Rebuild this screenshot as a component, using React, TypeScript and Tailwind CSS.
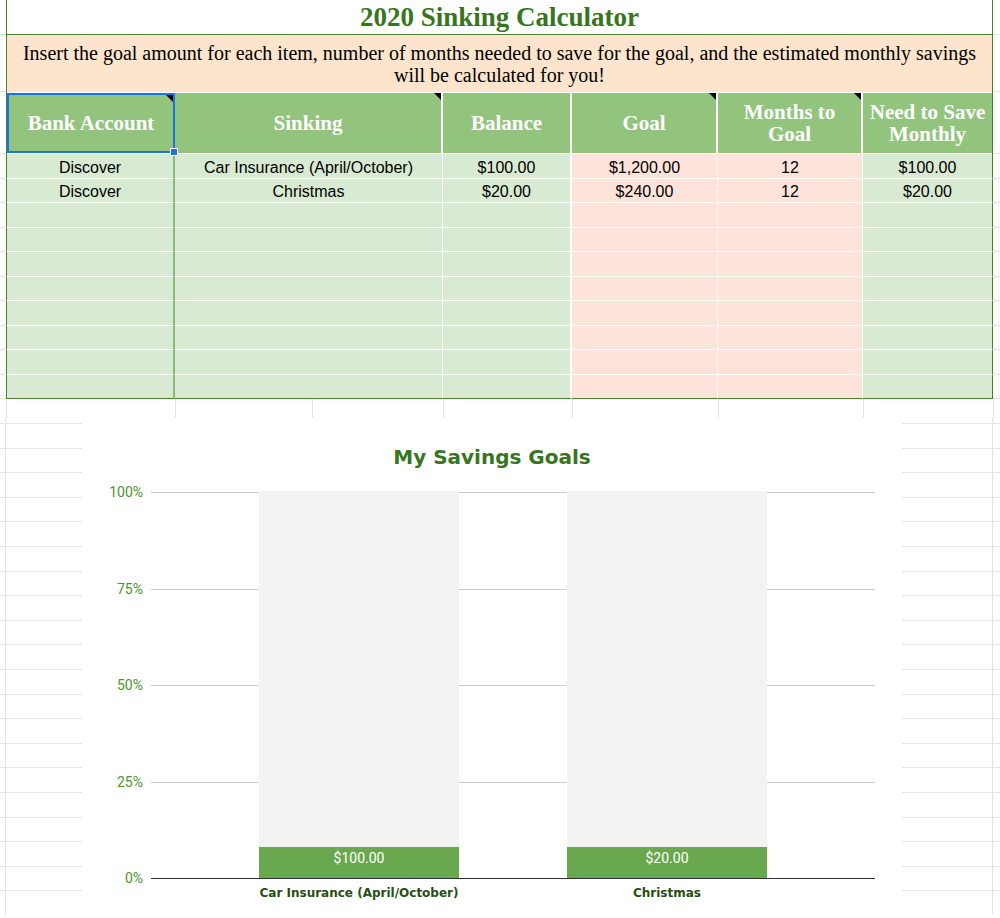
const serif = 'font-["Liberation_Serif","DejaVu_Serif",serif]'
const sans = 'font-["Liberation_Sans",Arial,sans-serif]'

type Row = { bank: string; item: string; balance: string; goal: string; months: string; monthly: string }

const rows: Row[] = [
  { bank: 'Discover', item: 'Car Insurance (April/October)', balance: '$100.00', goal: '$1,200.00', months: '12', monthly: '$100.00' },
  { bank: 'Discover', item: 'Christmas', balance: '$20.00', goal: '$240.00', months: '12', monthly: '$20.00' },
]

const bars = [
  { label: 'Car Insurance (April/October)', value: '$100.00', pct: 100 / 1200 },
  { label: 'Christmas', value: '$20.00', pct: 20 / 240 },
]

function Corner() {
  return <div className="absolute top-0 right-0 w-0 h-0 border-l-[7px] border-l-transparent border-t-[7px] border-t-black" />
}

function Gutter({ count, width, line }: { count: number; width: string; line: 'left' | 'right' }) {
  const mark = line === 'left' ? 'w-[6px]' : 'w-[91px]'
  return (
    <div className={`${width} flex flex-col`}>
      <div className="h-[5px] flex">
        <div className={`${mark} border-r border-[#e3e3e3]`} />
      </div>
      {Array.from({ length: count }).map((_, i) => (
        <div key={i} className="h-[24.6px] shrink-0 border-t border-[#e6e6e6] flex">
          <div className={`${mark} border-r border-[#e3e3e3]`} />
        </div>
      ))}
    </div>
  )
}

export default function App() {
  const empty = Array.from({ length: 8 })
  const cell = `h-[24.5px] flex items-center justify-center pt-[4px] text-[16px] leading-[18px] text-black ${sans}`
  return (
    <div className="w-[1000px] h-[918px] bg-white overflow-hidden">
      {/* Sheet table */}
      <div className="grid grid-cols-[6px_169px_268px_129px_146px_145px_130px_7px]">
        {/* Title */}
        <div className="h-[35px] border-b border-[#e3e3e3]" />
        <div className={`col-span-6 h-[35px] border-x border-b border-[#4a812f] flex items-center justify-center text-[#38761d] font-bold text-[27px] ${serif}`}>
          2020 Sinking Calculator
        </div>
        <div className="border-b border-[#e3e3e3]" />

        {/* Instructions */}
        <div className="border-b border-[#e3e3e3]" />
        <div className={`col-span-6 h-[57px] bg-[#fde5cd] border-x border-[#4a812f] flex items-center justify-center text-center px-[12px] pt-[1px] text-[20px] leading-[22px] text-black ${serif}`}>
          Insert the goal amount for each item, number of months needed to save for the goal, and the estimated monthly savings will be calculated for you!
        </div>
        <div className="border-b border-[#e3e3e3]" />

        {/* Header */}
        <div className="border-b border-[#e3e3e3]" />
        <div className="col-span-6 h-[62px] bg-white border-x border-[#4a812f] pt-[1px] grid grid-cols-[168px_268px_129px_146px_145px_129px]">
          {[
            { t: 'Bank Account', corner: true },
            { t: 'Sinking', corner: true },
            { t: 'Balance', corner: false },
            { t: 'Goal', corner: true },
            { t: 'Months to Goal', corner: true },
            { t: 'Need to Save Monthly', corner: false },
          ].map((h, i) => (
            <div
              key={h.t}
              className={`relative h-[60px] bg-[#93c47d] flex items-center justify-center text-center text-white font-bold text-[21px] leading-[22px] ${serif} ${i === 0 ? 'border-2 border-[#1a73e8]' : i < 5 ? 'border-r-2 border-white' : ''}`}
            >
              <span className={i === 4 ? 'px-[14px]' : ''}>{h.t}</span>
              {h.corner && <Corner />}
              {i === 0 && <div className="absolute -bottom-[5px] -right-[5px] w-[8px] h-[8px] bg-[#1a73e8] border border-white z-10" />}
            </div>
          ))}
        </div>
        <div className="border-b border-[#e3e3e3]" />

        {/* Data rows */}
        {[...rows, ...empty.map(() => null)].map((r, i) => {
          const bottom = i === 9 ? 'border-b-[#4a812f]' : 'border-b-white'
          return (
            <div key={i} className="contents">
              <div className="h-[24.5px] border-b border-[#e3e3e3]" />
              <div className={`bg-[#d9ead3] border-l border-l-[#4a812f] border-r-2 border-r-[#8db67a] border-b ${bottom} ${cell}`}>
                {r?.bank}
              </div>
              <div className={`bg-[#d9ead3] border-r border-r-white border-b ${bottom} ${cell}`}>{r?.item}</div>
              <div className={`bg-[#d9ead3] border-r-2 border-r-white border-b ${bottom} ${cell}`}>{r?.balance}</div>
              <div className={`bg-[#fee3da] border-r border-r-white border-b ${bottom} ${cell}`}>{r?.goal}</div>
              <div className={`bg-[#fee3da] border-r border-r-white border-b ${bottom} ${cell}`}>{r?.months}</div>
              <div className={`bg-[#d9ead3] border-r border-r-[#4a812f] border-b ${bottom} ${cell}`}>{r?.monthly}</div>
              <div className="h-[24.5px] border-b border-[#e3e3e3]" />
            </div>
          )
        })}
      </div>

      {/* Empty sheet strip above chart */}
      <div className="flex h-[19px]">
        {[6, 169, 137, 131, 129, 146, 145, 130, 7].map((w, i) => (
          <div key={i} style={{ width: w }} className={i > 0 ? 'border-l border-[#e3e3e3]' : ''} />
        ))}
      </div>

      {/* Chart row */}
      <div className="flex h-[499px]">
        <Gutter count={20} width="w-[82px]" line="left" />

        <div className="w-[820px] bg-white flex flex-col">
          <div className={`pt-[27px] text-center text-[20px] leading-[24px] font-bold text-[#38761d] font-["DejaVu_Sans",sans-serif]`}>
            My Savings Goals
          </div>

          <div className="flex mt-[22px]">
            <div className={`w-[69px] pr-[8px] h-[402px] -mt-[7px] flex flex-col justify-between items-end text-[14px] leading-[16px] text-[#4a962c] font-["Roboto",sans-serif]`}>
              <span>100%</span>
              <span>75%</span>
              <span>50%</span>
              <span>25%</span>
              <span>0%</span>
            </div>

            <div className="w-[724px] flex flex-col">
              <div className="relative h-[388px] border-b border-[#333333]">
                {/* gridlines */}
                <div className="absolute inset-0 pt-[1px] flex flex-col">
                  {[0, 1, 2, 3].map((g) => (
                    <div key={g} className="h-[96.5px] border-t border-[#cccccc]" />
                  ))}
                </div>
                <div className="relative h-full flex justify-evenly">
                  {bars.map((b) => (
                    <div key={b.label} className="w-[200px] h-full flex flex-col">
                      <div className="flex-1 bg-[#f3f3f3]" />
                      <div
                        className={`bg-[#6aa84f] flex items-start justify-center pt-[3px] text-white text-[14px] leading-[16px] font-["Roboto",sans-serif]`}
                        style={{ height: `${Math.round(b.pct * 372)}px` }}
                      >
                        {b.value}
                      </div>
                    </div>
                  ))}
                </div>
              </div>
              <div className="flex justify-evenly pt-[6px]">
                {bars.map((b) => (
                  <div key={b.label} className={`w-[200px] flex justify-center whitespace-nowrap text-[12px] leading-[16px] font-bold text-[#274e13] font-["DejaVu_Sans",sans-serif]`}>
                    {b.label}
                  </div>
                ))}
              </div>
            </div>
          </div>
        </div>

        <Gutter count={20} width="w-[98px]" line="right" />
      </div>
    </div>
  )
}
